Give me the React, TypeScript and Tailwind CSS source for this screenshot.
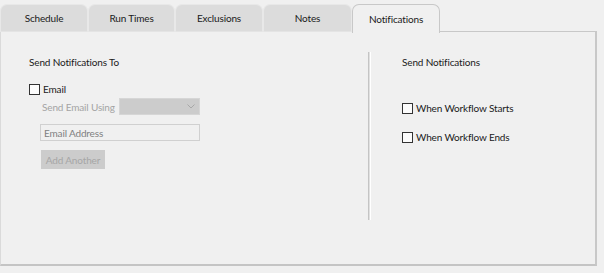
import React from "react";

const tabs = [
  { label: "Schedule", w: "w-[88px]" },
  { label: "Run Times", w: "w-[87px]" },
  { label: "Exclusions", w: "w-[88px]" },
  { label: "Notes", w: "w-[89px]" },
];

function Check({ label }: { label: string }) {
  return (
    <label className="flex items-center h-[14px] gap-[3px] text-[#1a1a1a]">
      <span className="w-[11px] h-[11px] border border-[#333333] bg-[#fcfcfc] shrink-0" />
      <span>{label}</span>
    </label>
  );
}

export default function App() {
  return (
    <div
      className="w-[604px] h-[273px] bg-[#f0f0f0] text-[10px] leading-[14px] tracking-[-0.15px] text-[#1a1a1a] overflow-hidden whitespace-nowrap"
      style={{ fontFamily: 'Lato, "Noto Sans", sans-serif' }}
    >
      {/* tab strip */}
      <div className="flex items-end h-[32px] w-[597px]">
        {tabs.map((t) => (
          <div
            key={t.label}
            className={`${t.w} h-[28px] flex items-center justify-center bg-[#dcdcdc] rounded-t-[7px] border-t border-x border-[#e8e8e8] border-b border-b-[#e4e4e4]`}
          >
            {t.label}
          </div>
        ))}
        <div className="w-[88px] h-[29px] flex items-center justify-center bg-[#f0f0f0] rounded-t-[7px] border-t border-x border-[#c8c8c8] relative -mb-px pb-px">
          Notifications
        </div>
        <div className="flex-1 h-px bg-[#c8c8c8]" />
      </div>

      {/* panel */}
      <div className="w-[597px] h-[234px] border-l border-l-[#dadada] border-r-2 border-r-[#c8c8c8] border-b-2 border-b-[#c4c4c4] flex">
        <div className="w-[367px] pl-[28px] pt-[23px] flex flex-col items-start">
          <div className="h-[14px]">Send Notifications To</div>
          <div className="mt-[13px]">
            <Check label="Email" />
          </div>
          <div className="pl-[13px] mt-[2px] flex items-center">
            <span className="text-[#a4a4a4] w-[77px]">Send Email Using</span>
            <div className="w-[81px] h-[17px] bg-[#cccccc] border border-[#d6d6d6] flex items-center justify-end pr-[4px]">
              <svg width="8" height="5" viewBox="0 0 8 5">
                <path d="M0.5 0.5 L4 4 L7.5 0.5" fill="none" stroke="#a8a8a8" strokeWidth="1" />
              </svg>
            </div>
          </div>
          <div className="ml-[11px] mt-[9px] w-[160px] h-[17px] border border-[#d0d0d0] bg-[#f0f0f0] flex items-center pl-[3px] text-[#808080]">
            Email Address
          </div>
          <div className="ml-[12px] mt-[9px] w-[64px] h-[19px] bg-[#cccccc] flex items-center justify-center text-[#a6a6a6]">
            Add Another
          </div>
        </div>
        <div className="w-[3px] h-[168px] mt-[20px] border-l border-l-[#c4c4c4] border-r border-r-[#ffffff] bg-[#e0e0e0]" />
        <div className="pl-[31px] pt-[23px] flex flex-col items-start">
          <div className="h-[14px]">Send Notifications</div>
          <div className="mt-[32px]">
            <Check label="When Workflow Starts" />
          </div>
          <div className="mt-[15px]">
            <Check label="When Workflow Ends" />
          </div>
        </div>
      </div>
    </div>
  );
}
